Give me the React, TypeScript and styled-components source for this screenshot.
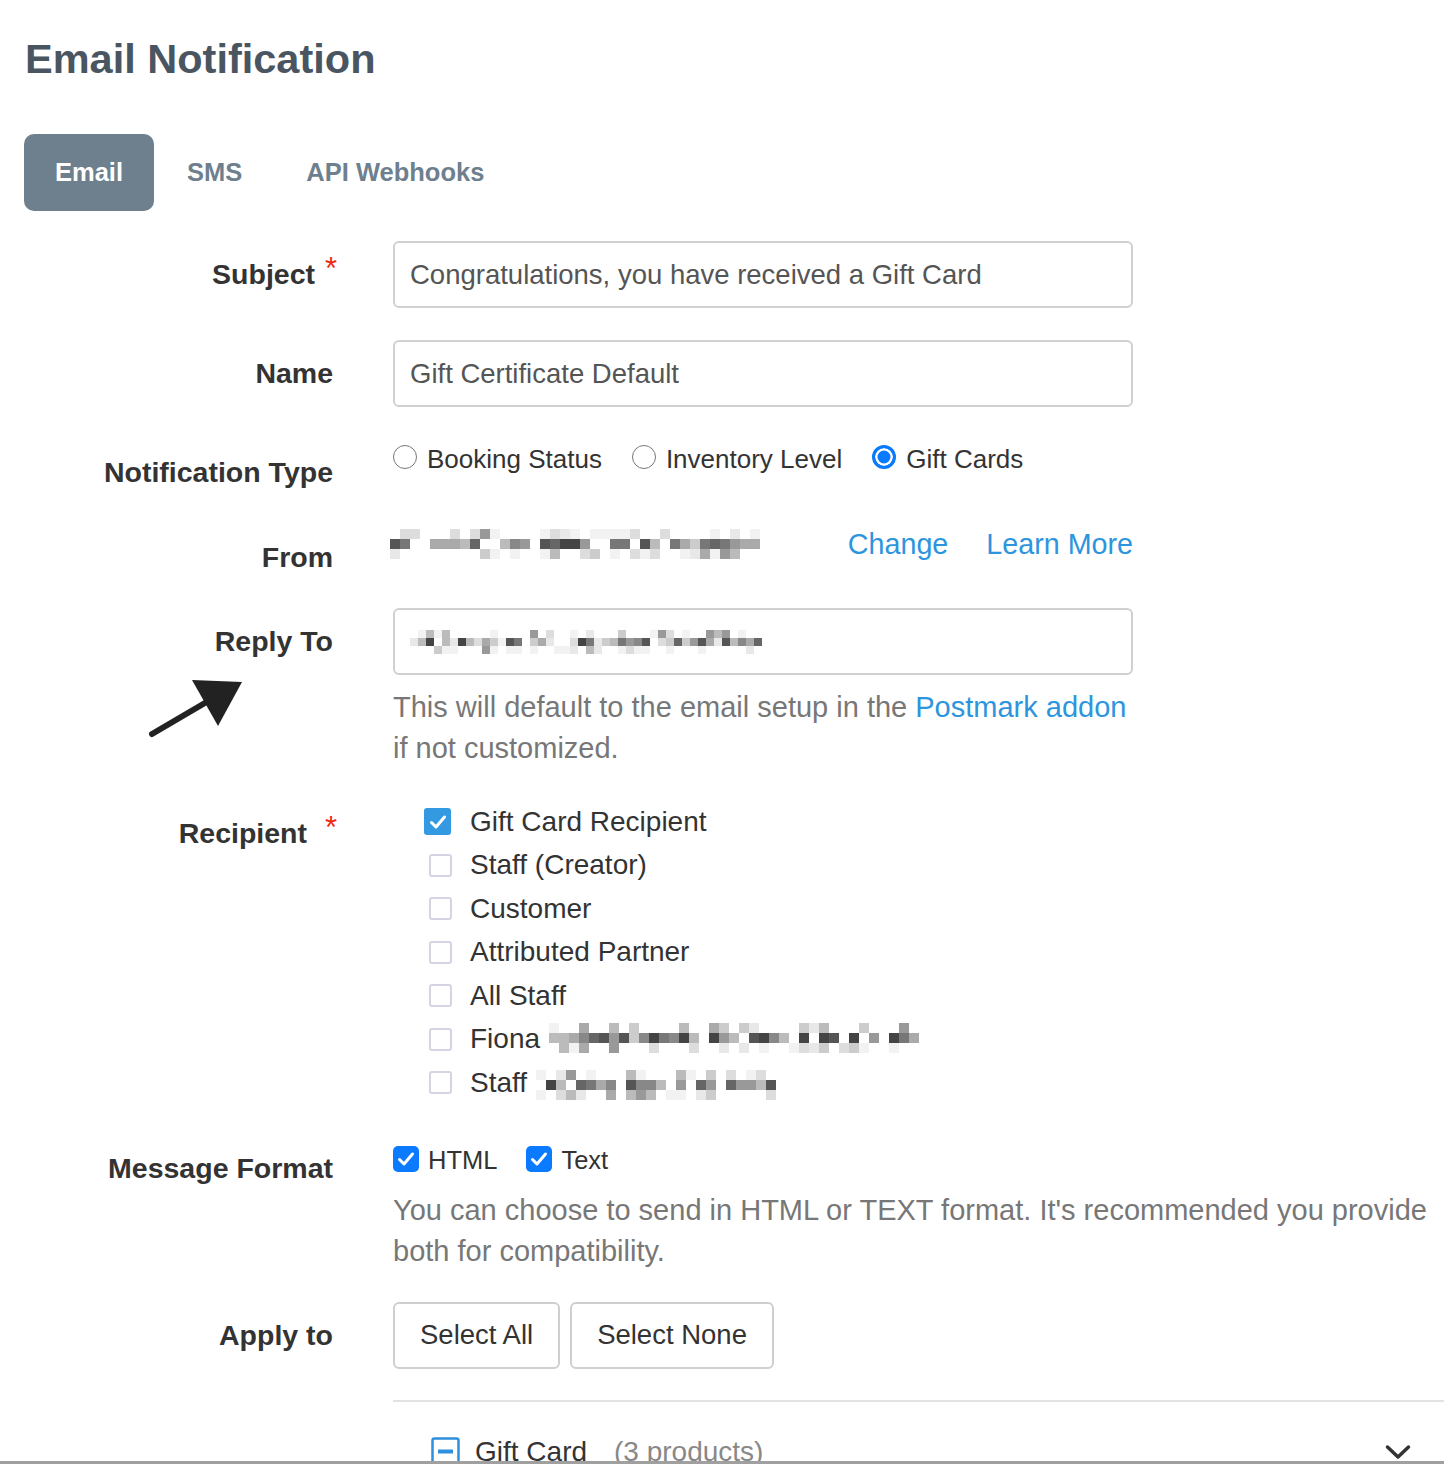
import React from 'react'
import styled, { createGlobalStyle } from 'styled-components'

// ── global ──────────────────────────────────────────────
const Global = createGlobalStyle`
  html, body { margin: 0; padding: 0; background: #fff; overflow: hidden; }
  body { font-family: "Liberation Sans", Arial, Helvetica, sans-serif; color: #333; }
  * { box-sizing: border-box; }
`

const Page = styled.div`
  height: 1464px;
  overflow: hidden;
`

const Title = styled.h1`
  margin: 35px 0 0 25px;
  font-size: 41.5px;
  line-height: 47px;
  font-weight: 700;
  color: #4a5562;
`

// ── tabs ────────────────────────────────────────────────
const Tabs = styled.div`
  display: flex;
  gap: 2px;
  margin: 52px 0 0 24px;
`

const Tab = styled.div<{ $active?: boolean }>`
  height: 77px;
  padding: 0 31px;
  display: flex;
  align-items: center;
  border-radius: 10px;
  font-size: 25.5px;
  font-weight: 700;
  background: ${({ $active }) => ($active ? '#6e7f8e' : 'transparent')};
  color: ${({ $active }) => ($active ? '#fff' : '#6e7f8e')};
`

// ── form grid ───────────────────────────────────────────
const Row = styled.div<{ $mt: number }>`
  display: grid;
  grid-template-columns: 309px 1fr;
  column-gap: 60px;
  padding-left: 24px;
  margin-top: ${({ $mt }) => $mt}px;
`

const LabelCell = styled.div`
  display: flex;
  flex-direction: column;
  align-items: flex-end;
`

const Label = styled.label<{ $pad?: number }>`
  position: relative;
  font-size: 28.5px;
  font-weight: 700;
  line-height: 67px;
  color: #333;
  padding-right: ${({ $pad }) => $pad || 0}px;
`

const Star = styled.span`
  position: absolute;
  right: -4px;
  top: 14px;
  font-size: 31px;
  line-height: 28px;
  font-weight: 400;
  color: #ee2a14;
`

const Field = styled.div`
  width: 740px;
  height: 67px;
  border: 2px solid #d0d0d0;
  border-radius: 6px;
  padding: 0 15px;
  display: flex;
  align-items: center;
  font-size: 27.5px;
  color: #555;
`

const Help = styled.p<{ $max?: number; $mt: number }>`
  margin: ${({ $mt }) => $mt}px 0 0;
  font-size: 29px;
  line-height: 41px;
  color: #777;
  max-width: ${({ $max }) => ($max ? `${$max}px` : 'none')};
`

const Link = styled.a`
  color: #2d95de;
  text-decoration: none;
  font-size: inherit;
`

// ── radios ──────────────────────────────────────────────
const RadioGroup = styled.div`
  display: flex;
  align-items: center;
  gap: 30px;
  height: 40px;
`

const Option = styled.div`
  display: flex;
  align-items: center;
  gap: 10px;
  font-size: 26px;
  color: #333;
`

const Radio = styled.span<{ $on?: boolean }>`
  width: 24px;
  height: 24px;
  border-radius: 50%;
  margin-top: -4px;
  border: ${({ $on }) => ($on ? '3px solid #0a7aff' : '1.5px solid #777')};
  background: ${({ $on }) => ($on ? '#0a7aff' : '#fff')};
  box-shadow: ${({ $on }) => ($on ? 'inset 0 0 0 2.5px #fff' : 'none')};
`

// ── from ────────────────────────────────────────────────
const FromLine = styled.div`
  width: 740px;
  height: 40px;
  display: flex;
  align-items: center;
  justify-content: space-between;
  margin-left: -3px;
`

const Links = styled.div`
  display: flex;
  gap: 38px;
  font-size: 28.7px;
  margin-right: -3px;
`

// ── recipients ──────────────────────────────────────────
const List = styled.div`
  padding-left: 31px;
`

const Item = styled.div`
  height: 43.5px;
  display: flex;
  align-items: center;
  font-size: 28px;
  color: #333;
`

const Slot = styled.span`
  width: 28px;
  display: flex;
  margin-right: 18px;
`

const Box = styled.span<{ $on?: boolean }>`
  width: ${({ $on }) => ($on ? 27 : 23)}px;
  height: ${({ $on }) => ($on ? 27 : 23)}px;
  margin-left: ${({ $on }) => ($on ? 0 : 5)}px;
  border-radius: 3px;
  border: ${({ $on }) => ($on ? 'none' : '2px solid #d6d4e4')};
  background: ${({ $on }) => ($on ? '#3399e0' : '#fff')};
  display: flex;
  align-items: center;
  justify-content: center;
`

const RedactSlot = styled.span<{ $dy?: number }>`
  margin-left: 9px;
  margin-top: ${({ $dy }) => $dy || 0}px;
`

// ── message format ─────────────────────────────────────
const Formats = styled.div`
  display: flex;
  align-items: center;
  gap: 29px;
  height: 40px;
  margin-top: 6px;
`

const Fmt = styled.div`
  display: flex;
  align-items: center;
  gap: 9px;
  font-size: 25.5px;
  color: #333;
`

const MacBox = styled.span`
  width: 26px;
  height: 26px;
  border-radius: 5px;
  background: #0a7aff;
  display: flex;
  align-items: center;
  justify-content: center;
  margin-top: -3px;
`

// ── apply to ───────────────────────────────────────────
const Buttons = styled.div`
  display: flex;
  gap: 10px;
`

const Btn = styled.button`
  height: 67px;
  padding: 0 25px;
  border: 2px solid #cfcfcf;
  border-radius: 6px;
  background: #fff;
  font-family: inherit;
  font-size: 27.5px;
  color: #333;
`

const Divider = styled.div`
  height: 2px;
  background: #e2e2e2;
  margin: 31px 0 0 393px;
`

const GroupRow = styled.div`
  margin: 28px 0 0 431px;
  height: 44px;
  display: flex;
  align-items: center;
  padding-right: 33px;
  font-size: 28px;
  color: #333;
`

const GroupName = styled.span`
  margin-left: 15px;
`

const GroupCount = styled.span`
  margin-left: 27px;
  color: #888;
`

const Chevron = styled.svg`
  margin-left: auto;
`

const BottomEdge = styled.div`
  position: fixed;
  left: 0;
  right: 0;
  bottom: 0;
  height: 3px;
  background: #a0a0a0;
`

// ── pixelated (redacted) text ──────────────────────────
function Redacted({ w, seed, rows = 3, cell = 10, dark = 1 }: { w: number; seed: number; rows?: number; cell?: number; dark?: number }) {
  const cols = Math.floor(w / cell)
  let s = seed
  const rand = () => {
    s = (s * 9301 + 49297) % 233280
    return s / 233280
  }
  const shades = ['#444', '#555', '#666', '#777', '#888', '#999', '#aaa', '#bbb', '#ccc', '#ddd', '#e8e8e8', '#f2f2f2']
  const rects: React.ReactNode[] = []
  for (let r = 0; r < rows; r++) {
    for (let c = 0; c < cols; c++) {
      const v = rand()
      if (v < (r === 1 ? 0.25 : 0.55)) continue
      const bias = r === 1 ? 0 : 5
      const idx = Math.min(shades.length - 1, Math.floor(rand() * 9 / dark) + bias)
      rects.push(<rect key={`${r}-${c}`} x={c * cell} y={r * cell} width={cell} height={cell} fill={shades[idx]} />)
    }
  }
  return (
    <svg width={cols * cell} height={rows * cell} style={{ display: 'block' }}>
      {rects}
    </svg>
  )
}

const Check = ({ size = 18 }: { size?: number }) => (
  <svg width={size} height={size} viewBox="0 0 20 20">
    <path d="M3.5 10.5 L8 15 L16.5 5" fill="none" stroke="#fff" strokeWidth="3" strokeLinecap="round" strokeLinejoin="round" />
  </svg>
)

const recipients = [
  { label: 'Gift Card Recipient', on: true },
  { label: 'Staff (Creator)' },
  { label: 'Customer' },
  { label: 'Attributed Partner' },
  { label: 'All Staff' },
  { label: 'Fiona', redact: 370, seed: 17, dy: -2 },
  { label: 'Staff', redact: 244, seed: 41, dy: 4 },
]

export default function App() {
  return (
    <Page>
      <Global />
      <Title>Email Notification</Title>

      <Tabs>
        <Tab $active>Email</Tab>
        <Tab>SMS</Tab>
        <Tab>API Webhooks</Tab>
      </Tabs>

      <Row $mt={30}>
        <LabelCell>
          <Label $pad={18}>Subject<Star>*</Star></Label>
        </LabelCell>
        <Field>Congratulations, you have received a Gift Card</Field>
      </Row>

      <Row $mt={32}>
        <LabelCell>
          <Label>Name</Label>
        </LabelCell>
        <Field>Gift Certificate Default</Field>
      </Row>

      <Row $mt={32}>
        <LabelCell>
          <Label>Notification Type</Label>
        </LabelCell>
        <RadioGroup>
          <Option><Radio />Booking Status</Option>
          <Option><Radio />Inventory Level</Option>
          <Option><Radio $on />Gift Cards</Option>
        </RadioGroup>
      </Row>

      <Row $mt={18}>
        <LabelCell>
          <Label>From</Label>
        </LabelCell>
        <FromLine>
          <Redacted w={372} seed={5} rows={3} cell={10} />
          <Links>
            <Link href="#">Change</Link>
            <Link href="#">Learn More</Link>
          </Links>
        </FromLine>
      </Row>

      <Row $mt={17}>
        <LabelCell>
          <Label>Reply To</Label>
          <svg width="98" height="62" viewBox="0 0 98 62" style={{ marginRight: 87, marginTop: 2 }}>
            <path d="M4 57 L62 23" stroke="#222" strokeWidth="6" strokeLinecap="round" />
            <polygon points="44,3 94,5 70,49" fill="#222" />
          </svg>
        </LabelCell>
        <div>
          <Field>
            <Redacted w={352} seed={29} rows={3} cell={8} dark={0.8} />
          </Field>
          <Help $mt={12} $max={740}>
            This will default to the email setup in the <Link href="#">Postmark addon</Link> if not customized.
          </Help>
        </div>
      </Row>

      <Row $mt={31}>
        <LabelCell>
          <Label $pad={26}>Recipient<Star>*</Star></Label>
        </LabelCell>
        <List>
          {recipients.map((r) => (
            <Item key={r.label + (r.seed || '')}>
              <Slot>
                <Box $on={r.on}>{r.on && <Check size={20} />}</Box>
              </Slot>
              {r.label}
              {r.redact && (
                <RedactSlot $dy={r.dy}>
                  <Redacted w={r.redact} seed={r.seed!} rows={3} cell={10} />
                </RedactSlot>
              )}
            </Item>
          ))}
        </List>
      </Row>

      <Row $mt={30}>
        <LabelCell>
          <Label>Message Format</Label>
        </LabelCell>
        <div>
          <Formats>
            <Fmt><MacBox><Check size={20} /></MacBox>HTML</Fmt>
            <Fmt><MacBox><Check size={20} /></MacBox>Text</Fmt>
          </Formats>
          <Help $mt={9}>
            You can choose to send in HTML or TEXT format. It's recommended you provide both for compatibility.
          </Help>
        </div>
      </Row>

      <Row $mt={30}>
        <LabelCell>
          <Label>Apply to</Label>
        </LabelCell>
        <Buttons>
          <Btn>Select All</Btn>
          <Btn>Select None</Btn>
        </Buttons>
      </Row>

      <Divider />

      <GroupRow>
        <svg width="29" height="29" viewBox="0 0 29 29">
          <rect x="1.5" y="1.5" width="26" height="26" rx="2" fill="none" stroke="#2e8fdc" strokeWidth="2.5" />
          <rect x="7" y="12.5" width="15" height="4" fill="#2e8fdc" />
        </svg>
        <GroupName>Gift Card</GroupName>
        <GroupCount>(3 products)</GroupCount>
        <Chevron width="26" height="16" viewBox="0 0 26 16">
          <path d="M2.5 3 L13 13 L23.5 3" fill="none" stroke="#333" strokeWidth="3.5" strokeLinecap="round" strokeLinejoin="round" />
        </Chevron>
      </GroupRow>

      <BottomEdge />
    </Page>
  )
}
